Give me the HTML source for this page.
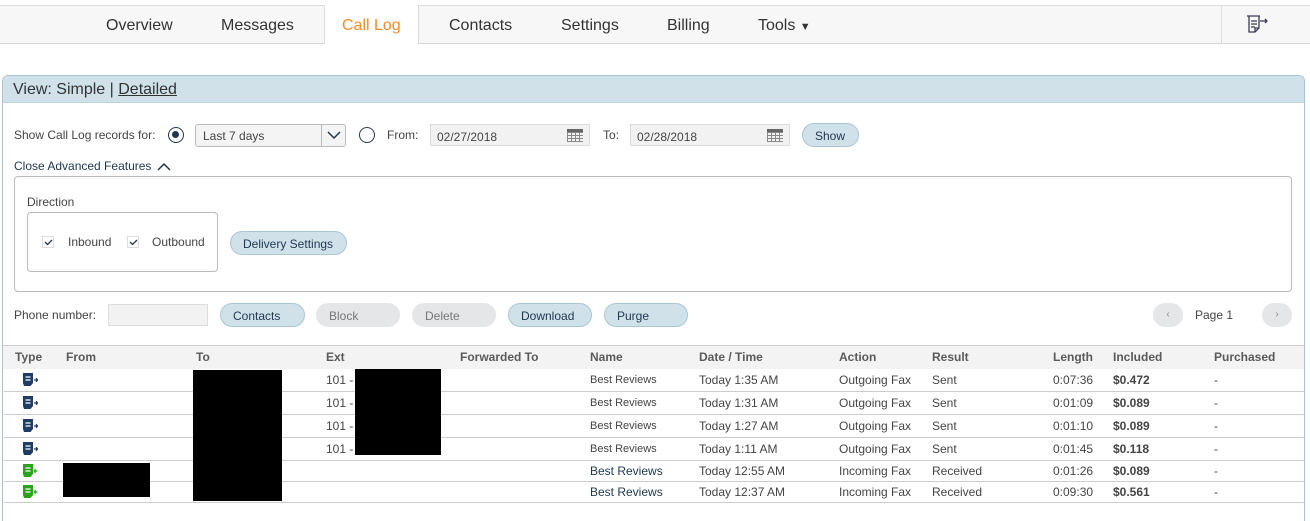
<!DOCTYPE html><html style="width:1310px;height:521px;overflow:hidden"><head><style>
*{box-sizing:border-box;margin:0;padding:0}
body{width:1310px;height:521px;background:#fff;font-family:"Liberation Sans",sans-serif;color:#444;position:relative;overflow:hidden}
.a{position:absolute;white-space:nowrap}
.nav{position:absolute;left:0;top:5px;width:1310px;height:39px;background:#f7f7f7;border-top:1px solid #ddd;border-bottom:1px solid #d6d6d6}
.nav span{position:absolute;top:11px;font-size:16px;color:#333}
.btn{position:absolute;height:24px;border-radius:12px;background:#d0e1ea;border:1px solid #a9c6d6;font-size:12px;color:#1e3750;padding-top:5px;padding-left:12px}
.btn.g{background:#e5e6e8;border-color:#e5e6e8;color:#777}
.inp{position:absolute;background:#f2f2f2;border:1px solid #ddd;height:22px;font-size:12px;padding:5px 0 0 6px;color:#444}
.cal{position:absolute;right:6px;top:4px;width:16px;height:13px;border-top:3px solid #666;background:repeating-linear-gradient(90deg,#888 0 1px,transparent 1px 4px),repeating-linear-gradient(0deg,#888 0 1px,transparent 1px 3px)}
.th{position:absolute;top:350px;font-size:12px;font-weight:bold;color:#5a5a5a}
.line{position:absolute;left:4px;width:1300px;height:1px;background:#ccc}
.c{position:absolute;font-size:12px;color:#444}
.red{position:absolute;background:#000}
.ic{position:absolute;width:16px;height:13px}
.cb{position:absolute;width:12px;height:12px;border:1px solid #ddd;background:#fff}
</style></head><body>
<div class="nav">
<span style="left:106px">Overview</span>
<span style="left:221px">Messages</span>
<div class="a" style="left:324px;top:-1px;width:95px;height:39px;background:#fff;border-left:1px solid #ddd;border-right:1px solid #ddd"></div>
<span style="left:342px;color:#f08a2c">Call Log</span>
<span style="left:449px">Contacts</span>
<span style="left:561px">Settings</span>
<span style="left:667px">Billing</span>
<span style="left:758px">Tools <small style="font-size:11px">▼</small></span>
<div class="a" style="left:1221px;top:0;width:1px;height:37px;background:#ddd"></div>
<svg class="a" style="left:1246px;top:9px" width="26" height="20" viewBox="0 0 26 20"><g fill="none" stroke="#3b3a5a" stroke-width="1.3"><path d="M1 1h13M3 1v16h6l4-4V1"/><path d="M5 6h6M5 9h6M5 12h4M9 17v-4h4"/><path d="M14 6h7M19 4l2 2-2 2"/></g></svg>
</div>
<div class="a" style="left:2px;top:75px;width:1303px;height:470px;border:1px solid #a9c6d6;border-radius:6px 6px 0 0"></div>
<div class="a" style="left:3px;top:76px;width:1301px;height:27px;background:#d0e1ea;border-radius:5px 5px 0 0;border-bottom:1px solid #bcd2de"></div>
<div class="a" style="left:13px;top:81px;font-size:16px;color:#333">View: Simple | <u>Detailed</u></div>
<div class="a" style="left:14px;top:128px;font-size:12px">Show Call Log records for:</div>
<div class="a" style="left:168px;top:127px;width:16px;height:16px;border:1.5px solid #1e3750;border-radius:50%"><div style="margin:3px;width:7px;height:7px;border-radius:50%;background:#1e3750"></div></div>
<div class="a" style="left:195px;top:124px;width:151px;height:23px;border:1px solid #bbb;border-radius:3px;background:#f4f4f4;font-size:12px;padding:4px 0 0 7px">Last 7 days<div class="a" style="left:125px;top:0;width:1px;height:21px;background:#bbb"></div><svg class="a" style="left:131px;top:6px" width="14" height="9"><path d="M1 1l6 6 6-6" fill="none" stroke="#1e3750" stroke-width="1.5"/></svg></div>
<div class="a" style="left:359px;top:127px;width:16px;height:16px;border:1.5px solid #1e3750;border-radius:50%"></div>
<div class="a" style="left:387px;top:128px;font-size:12px">From:</div>
<div class="inp" style="left:430px;top:124px;width:160px">02/27/2018<div class="cal"></div></div>
<div class="a" style="left:603px;top:128px;font-size:12px">To:</div>
<div class="inp" style="left:630px;top:124px;width:160px">02/28/2018<div class="cal"></div></div>
<div class="btn" style="left:802px;top:123px;width:57px">Show</div>
<div class="a" style="left:14px;top:159px;font-size:12px;color:#1e3750">Close Advanced Features</div>
<svg class="a" style="left:157px;top:162px" width="14" height="9"><path d="M1 8l6-6 6 6" fill="none" stroke="#1e3750" stroke-width="1.5"/></svg>
<div class="a" style="left:14px;top:176px;width:1278px;height:116px;border:1px solid #bbb;border-radius:4px"></div>
<div class="a" style="left:27px;top:195px;font-size:12px">Direction</div>
<div class="a" style="left:27px;top:212px;width:191px;height:60px;border:1px solid #bbb;border-radius:4px"></div>
<div class="cb" style="left:42px;top:236px"><svg class="a" style="left:1px;top:2px" width="9" height="7"><path d="M1 3l2.5 2.5L8 1" fill="none" stroke="#1e3750" stroke-width="1.3"/></svg></div>
<div class="a" style="left:68px;top:235px;font-size:12px">Inbound</div>
<div class="cb" style="left:127px;top:236px"><svg class="a" style="left:1px;top:2px" width="9" height="7"><path d="M1 3l2.5 2.5L8 1" fill="none" stroke="#1e3750" stroke-width="1.3"/></svg></div>
<div class="a" style="left:152px;top:235px;font-size:12px">Outbound</div>
<div class="btn" style="left:230px;top:231px;width:117px">Delivery Settings</div>
<div class="a" style="left:14px;top:308px;font-size:12px">Phone number:</div>
<div class="a" style="left:108px;top:304px;width:100px;height:22px;background:#f2f2f2;border:1px solid #ddd"></div>
<div class="btn" style="left:220px;top:303px;width:85px">Contacts</div>
<div class="btn g" style="left:316px;top:303px;width:84px">Block</div>
<div class="btn g" style="left:412px;top:303px;width:84px">Delete</div>
<div class="btn" style="left:508px;top:303px;width:84px">Download</div>
<div class="btn" style="left:604px;top:303px;width:84px">Purge</div>
<div class="a" style="left:1153px;top:303px;width:30px;height:24px;border-radius:12px;background:#e5e6e8;font-size:10px;color:#888;text-align:center;line-height:24px">‹</div>
<div class="a" style="left:1195px;top:308px;font-size:12px">Page 1</div>
<div class="a" style="left:1262px;top:303px;width:30px;height:24px;border-radius:12px;background:#e5e6e8;font-size:10px;color:#888;text-align:center;line-height:24px">›</div>
<div class="a" style="left:3px;top:345px;width:1301px;height:24px;background:#f3f3f3;border-top:1px solid #ccc"></div>
<div class="th" style="left:15px">Type</div><div class="th" style="left:66px">From</div><div class="th" style="left:196px">To</div><div class="th" style="left:326px">Ext</div><div class="th" style="left:460px">Forwarded To</div><div class="th" style="left:590px">Name</div><div class="th" style="left:699px">Date / Time</div><div class="th" style="left:839px">Action</div><div class="th" style="left:932px">Result</div><div class="th" style="left:1053px">Length</div><div class="th" style="left:1113px">Included</div><div class="th" style="left:1214px">Purchased</div>
<div class="line" style="top:391px"></div><div class="line" style="top:414px"></div><div class="line" style="top:437px"></div><div class="line" style="top:460px"></div><div class="line" style="top:481px"></div><div class="line" style="top:502px"></div>

<svg width="0" height="0" style="position:absolute"><defs>
<symbol id="o" viewBox="0 0 16 13"><path d="M1 0h10v10l-2.5 3H2L1 10z" fill="#1e3c64"/><path d="M3.5 4h5M3.5 7h5" stroke="#fff" stroke-width="1.2"/><path d="M12 7h3.5M14 5.2l1.6 1.8-1.6 1.8" stroke="#1e3c64" fill="none" stroke-width="1.2"/></symbol>
<symbol id="i" viewBox="0 0 16 13"><path d="M1 0h10v10l-2.5 3H2L1 10z" fill="#2aa21a"/><path d="M3.5 4h5M3.5 7h5" stroke="#fff" stroke-width="1.2"/><path d="M12 7h3.5M13.6 5.2L12 7l1.6 1.8" stroke="#2aa21a" fill="none" stroke-width="1.2"/></symbol></defs></svg>
<svg class="ic" style="left:22px;top:373px"><use href="#o"/></svg>
<svg class="ic" style="left:22px;top:396px"><use href="#o"/></svg>
<svg class="ic" style="left:22px;top:419px"><use href="#o"/></svg>
<svg class="ic" style="left:22px;top:442px"><use href="#o"/></svg>
<svg class="ic" style="left:22px;top:464px"><use href="#i"/></svg>
<svg class="ic" style="left:22px;top:485px"><use href="#i"/></svg>

<div class="c" style="left:326px;top:373px">101 -</div><div class="c" style="left:326px;top:396px">101 -</div><div class="c" style="left:326px;top:419px">101 -</div><div class="c" style="left:326px;top:442px">101 -</div>
<div class="red" style="left:193px;top:370px;width:89px;height:131px"></div>
<div class="red" style="left:355px;top:369px;width:86px;height:86px"></div>
<div class="red" style="left:63px;top:463px;width:87px;height:34px"></div>

<div class="c" style="left:590px;top:374px;font-size:11px">Best Reviews</div><div class="c" style="left:699px;top:373px">Today 1:35 AM</div><div class="c" style="left:839px;top:373px">Outgoing Fax</div><div class="c" style="left:932px;top:373px">Sent</div><div class="c" style="left:1053px;top:373px">0:07:36</div><div class="c" style="left:1113px;top:373px;font-weight:bold">$0.472</div><div class="c" style="left:1214px;top:373px">-</div>
<div class="c" style="left:590px;top:397px;font-size:11px">Best Reviews</div><div class="c" style="left:699px;top:396px">Today 1:31 AM</div><div class="c" style="left:839px;top:396px">Outgoing Fax</div><div class="c" style="left:932px;top:396px">Sent</div><div class="c" style="left:1053px;top:396px">0:01:09</div><div class="c" style="left:1113px;top:396px;font-weight:bold">$0.089</div><div class="c" style="left:1214px;top:396px">-</div>
<div class="c" style="left:590px;top:420px;font-size:11px">Best Reviews</div><div class="c" style="left:699px;top:419px">Today 1:27 AM</div><div class="c" style="left:839px;top:419px">Outgoing Fax</div><div class="c" style="left:932px;top:419px">Sent</div><div class="c" style="left:1053px;top:419px">0:01:10</div><div class="c" style="left:1113px;top:419px;font-weight:bold">$0.089</div><div class="c" style="left:1214px;top:419px">-</div>
<div class="c" style="left:590px;top:443px;font-size:11px">Best Reviews</div><div class="c" style="left:699px;top:442px">Today 1:11 AM</div><div class="c" style="left:839px;top:442px">Outgoing Fax</div><div class="c" style="left:932px;top:442px">Sent</div><div class="c" style="left:1053px;top:442px">0:01:45</div><div class="c" style="left:1113px;top:442px;font-weight:bold">$0.118</div><div class="c" style="left:1214px;top:442px">-</div>
<div class="c" style="left:590px;top:464px;color:#1e3750">Best Reviews</div><div class="c" style="left:699px;top:464px">Today 12:55 AM</div><div class="c" style="left:839px;top:464px">Incoming Fax</div><div class="c" style="left:932px;top:464px">Received</div><div class="c" style="left:1053px;top:464px">0:01:26</div><div class="c" style="left:1113px;top:464px;font-weight:bold">$0.089</div><div class="c" style="left:1214px;top:464px">-</div>
<div class="c" style="left:590px;top:485px;color:#1e3750">Best Reviews</div><div class="c" style="left:699px;top:485px">Today 12:37 AM</div><div class="c" style="left:839px;top:485px">Incoming Fax</div><div class="c" style="left:932px;top:485px">Received</div><div class="c" style="left:1053px;top:485px">0:09:30</div><div class="c" style="left:1113px;top:485px;font-weight:bold">$0.561</div><div class="c" style="left:1214px;top:485px">-</div>
</body></html>
